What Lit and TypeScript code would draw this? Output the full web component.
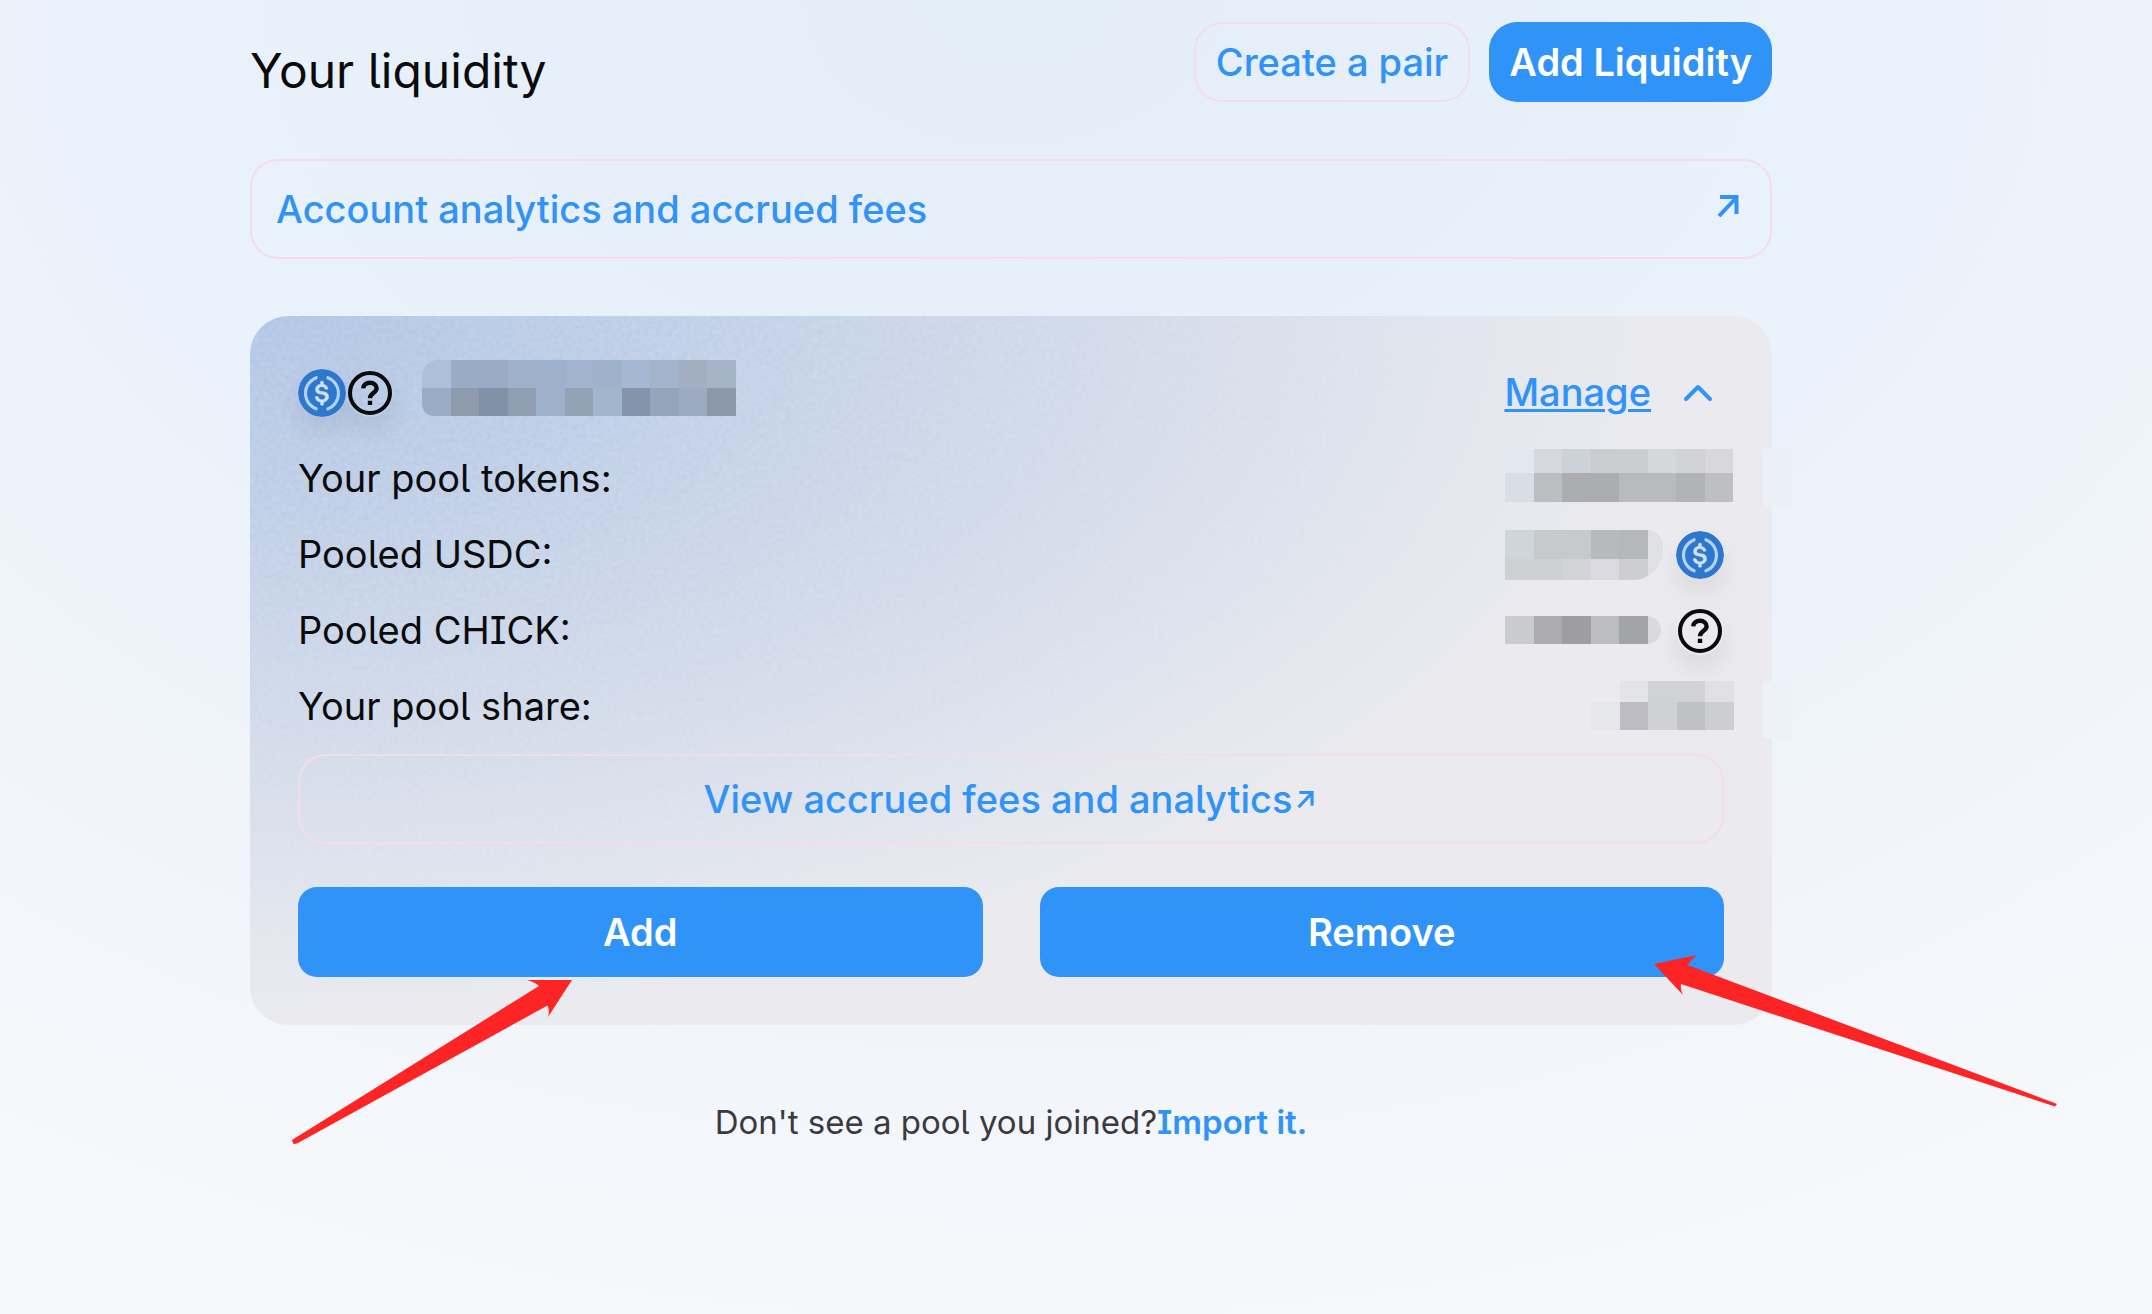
import { LitElement, html, svg, css } from "lit";
import { customElement } from "lit/decorators.js";

type Cell = [x: number, y: number, w: number, h: number, fill: string];

const CELL = 28.54;

/** Builds one row of equally wide redaction cells. */
function strip(x: number, y: number, h: number, fills: string[]): Cell[] {
  return fills.map((fill, i) => [x + i * CELL, y, CELL, h, fill]);
}

const NAME_CELLS: Cell[] = [
  ...strip(0, -4, 28, ["#adbfdb", "#9aabc5", "#9aaac7", "#9fb0cb", "#9db0cc", "#a2b3cf", "#a0b2cb", "#a6b7d3", "#a3b4ca", "#a1afc0", "#a5b3c6"]),
  ...strip(0, 24, 28, ["#9bacc6", "#8d9bad", "#8391a6", "#909eb1", "#9fb1ca", "#93a2b4", "#a3b5cc", "#8594aa", "#95a4b8", "#9cabbf", "#8b98a8"]),
];
const TOKENS_CELLS: Cell[] = [
  ...strip(0, -1, 24, ["#e3e7f0", "#d5d8dd", "#ccd2d8", "#cacccf", "#cccdd1", "#d5d7da", "#d2d3d6", "#d8d8db"]),
  ...strip(0, 23, 29, ["#d9dee6", "#bdbec2", "#acadb1", "#acadb1", "#b9babe", "#b9babe", "#b2b3b7", "#bebfc3"]),
  [258, -1, 29, 58, "#ebf0f8"],
];
const USDC_CELLS: Cell[] = [
  ...strip(0, 4, 29, ["#d0d5da", "#c8c9cd", "#c8c9cd", "#b8b9bd", "#b6b7ba", "#e0e1e5"]),
  ...strip(0, 33, 21, ["#cfd0d3", "#cfd0d4", "#d3d4d8", "#dadae0", "#cdced2", "#e0e1e5"]),
];
const CHICK_CELLS: Cell[] = strip(0, 14, 28, ["#cacbcf", "#adacb0", "#9e9ea0", "#bcbdc1", "#a3a4a8", "#d9dade"]);
const SHARE_CELLS: Cell[] = [
  ...strip(CELL, 3, 21, ["#e3e4e8", "#d1d2d5", "#d1d2d5", "#e1e1e5"]),
  ...strip(0, 24, 28, ["#e6e7eb", "#bdbcc2", "#d0d1d5", "#c0c1c5", "#cdced2"]),
  [172, 3, 29, 57, "#edf1f8"],
];

const mosaic = (name: string, width: number, cells: Cell[]) => html`
  <svg class="mosaic ${name}" width=${width} height="57" viewBox="0 0 ${width} 57" shape-rendering="crispEdges" aria-hidden="true">
    ${cells.map(([x, y, w, h, fill]) => svg`<rect x=${x} y=${y} width=${w} height=${h} fill=${fill}></rect>`)}
  </svg>`;

const usdcIcon = html`
  <svg class="token" viewBox="0 0 2000 2000" aria-hidden="true">
    <circle cx="1000" cy="1000" r="1000" fill="#2d77cc"></circle>
    <path fill="#cfe2f7" stroke="#cfe2f7" stroke-width="20" d="M1275 1158.33c0-145.83-87.5-195.83-262.5-216.66-125-16.67-150-50-150-108.34s41.67-95.83 125-95.83c75 0 116.67 25 137.5 87.5 4.17 12.5 16.67 20.83 29.17 20.83h66.66c16.67 0 29.17-12.5 29.17-29.16v-4.17c-16.67-91.67-91.67-162.5-187.5-170.83v-100c0-16.67-12.5-29.17-33.33-33.34h-62.5c-16.67 0-29.17 12.5-33.34 33.34v95.83c-125 16.67-204.16 100-204.16 204.17 0 137.5 83.33 191.66 258.33 212.5 116.67 20.83 154.17 45.83 154.17 112.5s-58.34 112.5-137.5 112.5c-108.34 0-145.84-45.84-158.34-108.34-4.16-16.66-16.66-25-29.16-25h-70.84c-16.66 0-29.16 12.5-29.16 29.17v4.17c16.66 104.16 83.33 179.16 220.83 200v100c0 16.66 12.5 29.16 33.33 33.33h62.5c16.67 0 29.17-12.5 33.34-33.33v-100c125-20.84 208.33-108.34 208.33-220.84z"></path>
    <path fill="#b4d2f2" d="M787.5 1595.83c-325-116.66-491.67-479.16-370.83-800 62.5-175 200-308.33 370.83-370.83 16.67-8.33 25-20.83 25-41.67V325c0-16.67-8.33-29.17-25-33.33-4.17 0-12.5 0-16.67 4.16-395.83 125-612.5 545.84-487.5 941.67 75 233.33 254.17 412.5 487.5 487.5 16.67 8.33 33.34 0 37.5-16.67 4.17-4.16 4.17-8.33 4.17-16.66v-58.34c0-12.5-12.5-29.16-25-37.5zM1229.17 295.83c-16.67-8.33-33.34 0-37.5 16.67-4.17 4.17-4.17 8.33-4.17 16.67v58.33c0 16.67 12.5 33.33 25 41.67 325 116.66 491.67 479.16 370.83 800-62.5 175-200 308.33-370.83 370.83-16.67 8.33-25 20.83-25 41.67V1700c0 16.67 8.33 29.17 25 33.33 4.17 0 12.5 0 16.67-4.16 395.83-125 612.5-545.84 487.5-941.67-75-237.5-258.34-416.67-487.5-491.67z"></path>
  </svg>`;

const helpIcon = html`
  <svg class="token" viewBox="0 0 24 24" fill="none" stroke="#0b0b0c" stroke-width="2" aria-hidden="true">
    <circle cx="12" cy="12" r="10"></circle>
    <path d="M8.600 9.700C8.700 7.900 10.100 6.900 12 6.900C13.900 6.900 15.300 8 15.300 9.800C15.300 11.800 12 12 12 14.600" stroke-width="2.200"></path>
    <path d="M12 15.900v2.100" stroke-width="2.200"></path>
  </svg>`;

const outArrow = (size: number) => html`
  <svg class="out" width=${size} height=${size} viewBox="0 0 22 22" fill="none" stroke="currentColor" stroke-width="4" aria-hidden="true">
    <path d="M3 2H19.500V19M19.500 2.500L2 21"></path>
  </svg>`;

@customElement("app-root")
export class AppRoot extends LitElement {
  static styles = css`
    :host {
      display: block;
      box-sizing: border-box;
      min-height: 100vh;
      padding: 22px 380px 0 250px;
      overflow: hidden;
      color: #0b0b0c;
      background: radial-gradient(2000px 1400px at 47% 0, #e4eef8 0%, #e7effa 25%, #eaf2fb 45%, #eff3fa 65%, #f3f6fb 82%, #f7f8fa 100%);
      font-family: Inter, "Liberation Sans", sans-serif;
      font-feature-settings: "ss02" 1;
      font-size: 38px;
      line-height: 57px;
    }
    * { box-sizing: border-box; }
    a { color: #3093f8; text-decoration: none; }
    button { font: inherit; font-feature-settings: inherit; border: 0; cursor: pointer; }
    svg { display: block; flex: none; }
    .top { display: flex; justify-content: space-between; align-items: flex-end; }
    h1 { margin: 0; font-size: 48px; line-height: 62px; font-weight: 400; }
    .top-actions { display: flex; gap: 19px; }
    .outlined { border: 2px solid #f5dce8; border-radius: 28px; font-weight: 500; display: flex; align-items: center; }
    .primary { background: #3093f8; color: #fff; font-weight: 600; }
    .pair { height: 80px; padding: 0 20px; }
    .liquidity { height: 80px; padding: 0 20px; border-radius: 28px; }
    .account { height: 100px; margin-top: 57px; padding: 0 31px 0 24px; justify-content: space-between; }
    .account .out { margin-bottom: 6px; }
    .card {
      position: relative;
      margin-top: 57px;
      padding: 48px;
      border-radius: 38px;
      background: radial-gradient(92% 100% at 2% 0, #b8ccea 0%, #ebebef 100%);
    }
    .noise {
      position: absolute;
      inset: 0;
      width: 100%;
      height: 100%;
      border-radius: 38px;
      opacity: 0.045;
      mask-image: radial-gradient(85% 95% at 2% 0, #000 30%, transparent 100%);
    }
    .body { position: relative; display: flex; flex-direction: column; }
    .row { display: flex; align-items: center; justify-content: space-between; height: 57px; }
    .head { margin-bottom: 29px; }
    .pool { display: flex; align-items: center; }
    .token { width: 48px; height: 48px; border-radius: 24px; box-shadow: 0 14px 24px rgba(0, 0, 0, 0.075); }
    .mosaic { overflow: visible; }
    .name { margin-left: 28px; clip-path: inset(-4px 0 5px 0 round 16px 0 0 12px); }
    .manage { display: flex; align-items: center; gap: 23px; padding: 0 2px 0 0; background: none; color: #3093f8; font-weight: 500; }
    .manage span { text-decoration: underline; text-decoration-thickness: 3px; text-underline-offset: 3px; }
    dl { margin: 0; display: flex; flex-direction: column; gap: 19px; }
    dt, dd { margin: 0; }
    dd { display: flex; align-items: center; gap: 13px; }
    .tokens, .share { margin-right: -68px; }
    .usdc { clip-path: inset(4px 0 3px 0 round 0 16px 30px 0); }
    .chick { clip-path: inset(14px 2px 15px 0 round 0 14px 14px 0); }
    .fees { height: 90px; margin-top: 19px; padding-right: 4px; justify-content: center; gap: 5px; }
    .actions { display: grid; grid-template-columns: 1fr 1fr; gap: 57px; margin-top: 43px; }
    .action { position: relative; display: flex; }
    .action .primary { flex: 1; height: 90px; border-radius: 19px; }
    .pointer { position: absolute; pointer-events: none; fill: #fc2424; }
    .to-add { left: -10px; top: 89px; }
    .to-remove { right: -336px; top: 63px; }
    .footer { margin: 69px 0 0; text-align: center; font-size: 33px; color: #3a3b3e; }
    .footer a { font-weight: 600; }
  `;

  render() {
    return html`
      <header class="top">
        <h1>Your liquidity</h1>
        <div class="top-actions">
          <a class="outlined pair" href="#create">Create a pair</a>
          <button class="primary liquidity">Add Liquidity</button>
        </div>
      </header>
      <a class="outlined account" href="#account">Account analytics and accrued fees ${outArrow(22)}</a>
      <section class="card">
        <svg class="noise" aria-hidden="true">
          <filter id="grain" x="0" y="0" width="100%" height="100%" color-interpolation-filters="sRGB">
            <feTurbulence type="fractalNoise" baseFrequency="0.22" numOctaves="3"></feTurbulence>
            <feColorMatrix type="matrix" values="0 0 0 0 0.200  0 0 0 0 0.250  0 0 0 0 0.320  1.800 0 0 0 -0.400"></feColorMatrix>
          </filter>
          <rect width="100%" height="100%" filter="url(#grain)"></rect>
        </svg>
        <div class="body">
          <div class="row head">
            <div class="pool">${usdcIcon}${helpIcon}${mosaic("name", 314, NAME_CELLS)}</div>
            <button class="manage">
              <span>Manage</span>
              <svg width="48" height="48" viewBox="0 0 24 24" fill="none" stroke="currentColor" stroke-width="2" stroke-linecap="round" stroke-linejoin="round" aria-hidden="true"><path d="M18 15l-6-6-6 6"></path></svg>
            </button>
          </div>
          <dl>
            <div class="row"><dt>Your pool tokens:</dt><dd>${mosaic("tokens", 287, TOKENS_CELLS)}</dd></div>
            <div class="row"><dt>Pooled USDC:</dt><dd>${mosaic("usdc", 158, USDC_CELLS)}${usdcIcon}</dd></div>
            <div class="row"><dt>Pooled CHICK:</dt><dd>${mosaic("chick", 158, CHICK_CELLS)}${helpIcon}</dd></div>
            <div class="row"><dt>Your pool share:</dt><dd>${mosaic("share", 201, SHARE_CELLS)}</dd></div>
          </dl>
          <a class="outlined fees" href="#fees">View accrued fees and analytics${outArrow(17)}</a>
          <div class="actions">
            <div class="action">
              <button class="primary">Add</button>
              <svg class="pointer to-add" width="290" height="172" viewBox="288 976 290 172" aria-hidden="true"><path d="M292 1140L539 986Q535 982 527 980L572 980L548 1017Q550 1011 547.500 1005.500L297 1143.500L293.500 1144Z"></path></svg>
            </div>
            <div class="action">
              <button class="primary">Remove</button>
              <svg class="pointer to-remove" width="410" height="160" viewBox="1650 950 410 160" aria-hidden="true"><path d="M1654 964L1697 955Q1691 960 1687.500 965L2057 1104L2055 1106.500L1681 984Q1680 989 1683 995Z"></path></svg>
            </div>
          </div>
        </div>
      </section>
      <p class="footer">Don't see a pool you joined?<a href="#import">Import it.</a></p>
    `;
  }
}
